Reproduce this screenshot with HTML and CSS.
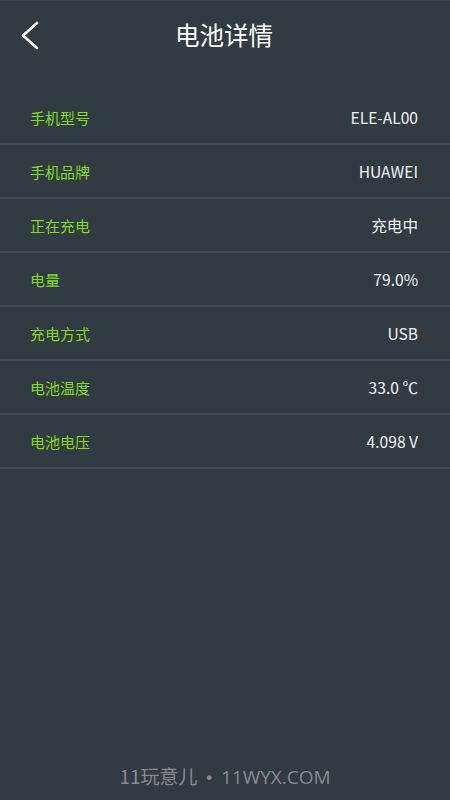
FILE: index.html
```html
<!DOCTYPE html>
<html lang="zh">
<head>
<meta charset="utf-8">
<link rel="stylesheet" href="styles.css">
</head>
<body>
<div class="page">
  <header class="topbar">
    <div class="back">
      <svg width="20" height="30" viewBox="0 0 20 30"><polyline points="17,3 3,15.5 17,28" fill="none" stroke="#ffffff" stroke-width="2.6" stroke-linecap="round" stroke-linejoin="round"/></svg>
    </div>
    <h1 class="title">电池详情</h1>
  </header>
  <ul class="list">
    <li class="row"><span class="label">手机型号</span><span class="value">ELE-AL00</span></li>
    <li class="row"><span class="label">手机品牌</span><span class="value">HUAWEI</span></li>
    <li class="row"><span class="label">正在充电</span><span class="value">充电中</span></li>
    <li class="row"><span class="label">电量</span><span class="value">79.0%</span></li>
    <li class="row"><span class="label">充电方式</span><span class="value">USB</span></li>
    <li class="row"><span class="label">电池温度</span><span class="value">33.0 ℃</span></li>
    <li class="row"><span class="label">电池电压</span><span class="value">4.098 V</span></li>
  </ul>
  <div class="spacer"></div>
  <footer class="watermark">11玩意儿<span class="dot">•</span><span class="latin">11WYX.COM</span></footer>
</div>
</body>
</html>
```
FILE: styles.css
```css
html, body {
  margin: 0;
  padding: 0;
  background: #323b42;
}
body {
  font-family: "Noto Sans CJK SC", "Noto Sans", sans-serif;
  color: #ffffff;
}
.page {
  width: 450px;
  height: 800px;
  display: flex;
  flex-direction: column;
  background: #323b42;
  border-top: 1px solid #3c454b;
  box-sizing: border-box;
}
.topbar {
  position: relative;
  height: 71px;
  display: flex;
  align-items: center;
  justify-content: center;
}
.back {
  position: absolute;
  left: 20px;
  top: 19px;
  width: 20px;
  height: 30px;
}
.back svg { display: block; }
.title {
  margin: 0;
  font-size: 24.5px;
  font-weight: 400;
  color: #ffffff;
  line-height: 1;
  position: relative;
  top: -1px;
  left: -1px;
}
.list {
  list-style: none;
  margin: 19px 0 0 0;
  padding: 0;
}
.row {
  height: 52px;
  border-bottom: 2px solid #434c52;
  display: flex;
  align-items: center;
  justify-content: space-between;
  padding: 0 32px 0 30px;
}
.label {
  color: #80da1f;
  font-size: 15px;
}
.value {
  color: #f2f2f2;
  font-size: 15.6px;
}
.spacer { flex: 1; }
.watermark {
  text-align: center;
  color: #8c8790;
  font-size: 19px;
  padding-bottom: 10px;
}
.dot {
  font-family: "DejaVu Sans", sans-serif;
  font-size: 16px;
  margin: 0 7px;
}
.latin {
  font-family: "Open Sans", sans-serif;
  font-size: 19px;
}
```
